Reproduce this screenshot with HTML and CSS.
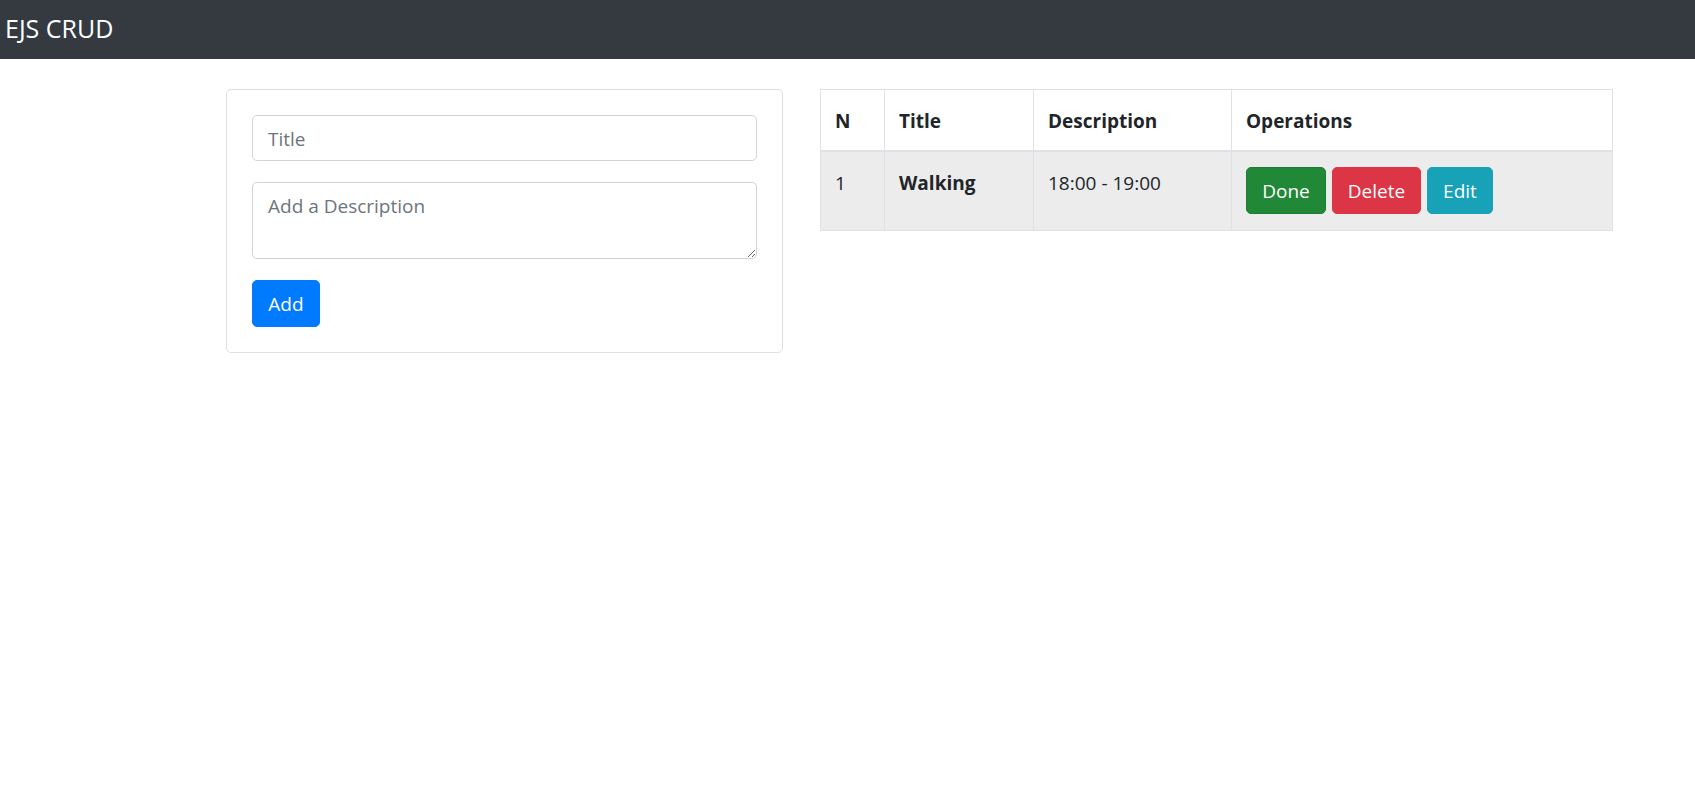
FILE: index.html
```html
<!DOCTYPE html>
<html lang="en">
<head>
<meta charset="utf-8">
<title>EJS CRUD</title>
<link rel="stylesheet" href="styles.css">
</head>
<body>
<nav class="navbar">
  <a class="brand" href="#">EJS CRUD</a>
</nav>
<main class="main">
  <section class="card">
    <form class="form">
      <input class="field" type="text" placeholder="Title">
      <textarea class="field area" placeholder="Add a Description"></textarea>
      <div class="actions"><button type="button" class="btn btn-primary">Add</button></div>
    </form>
  </section>
  <section class="table-wrap">
    <table class="table">
      <thead>
        <tr>
          <th class="col-n">N</th>
          <th class="col-title">Title</th>
          <th class="col-desc">Description</th>
          <th class="col-ops">Operations</th>
        </tr>
      </thead>
      <tbody>
        <tr class="row-active">
          <td>1</td>
          <td class="bold">Walking</td>
          <td>18:00 - 19:00</td>
          <td class="ops-cell">
            <div class="ops">
              <button type="button" class="btn btn-success">Done</button>
              <button type="button" class="btn btn-danger">Delete</button>
              <button type="button" class="btn btn-info">Edit</button>
            </div>
          </td>
        </tr>
      </tbody>
    </table>
  </section>
</main>
</body>
</html>
```

FILE: styles.css
```css
* { box-sizing: border-box; }
body {
  margin: 0;
  font-family: "Open Sans", "Noto Sans", sans-serif;
  font-size: 19px;
  color: #212529;
  background: #fff;
}
.navbar {
  height: 59px;
  background: #343a40;
  display: flex;
  align-items: center;
  padding-left: 5px;
}
.brand {
  color: #fff;
  text-decoration: none;
  font-size: 25px;
  line-height: 1;
  margin-top: -2px;
}
.main {
  display: flex;
  align-items: flex-start;
  padding: 30px 0 0 226px;
  gap: 37px;
}
.card {
  width: 557px;
  border: 1px solid #dfdfdf;
  border-radius: 5px;
  padding: 25px;
}
.form {
  display: flex;
  flex-direction: column;
  gap: 21px;
}
.field {
  display: block;
  width: 100%;
  height: 46px;
  border: 1px solid #ced4da;
  border-radius: 5px;
  padding: 1px 15px 0;
  font: inherit;
  color: #495057;
  background: #fff;
}
.field::placeholder { color: #6c757d; opacity: 1; }
.area {
  height: 77px;
  padding-top: 9px;
  resize: vertical;
  line-height: 1.5;
}
.actions { display: flex; }
.btn {
  font: inherit;
  color: #fff;
  border: 1px solid transparent;
  border-radius: 5px;
  height: 47px;
  padding: 0;
  cursor: pointer;
}
.btn-primary { background: #007bff; border-color: #007bff; width: 68px; }
.btn-success { background: #218838; border-color: #1e7e34; width: 80px; }
.btn-danger { background: #dc3545; border-color: #dc3545; width: 89px; }
.btn-info { background: #17a2b8; border-color: #17a2b8; width: 66px; }
.table-wrap { width: 793px; }
.table {
  width: 100%;
  border-collapse: collapse;
  border: 1px solid #dee2e6;
}
.table th, .table td {
  border: 1px solid #dee2e6;
  padding: 16px 14px 15px;
  text-align: left;
  vertical-align: top;
  line-height: 30px;
}
.table thead th {
  padding: 16px 14px 14px;
  border-bottom: 2px solid #dee2e6;
  font-weight: 700;
}
.table td.ops-cell { padding: 15px 14px 16px; }
.col-n { width: 64px; }
.col-title { width: 149px; }
.col-desc { width: 198px; }
.bold { font-weight: 700; }
.row-active td { background: #ececec; }
.ops {
  display: flex;
  gap: 6px;
}
```
